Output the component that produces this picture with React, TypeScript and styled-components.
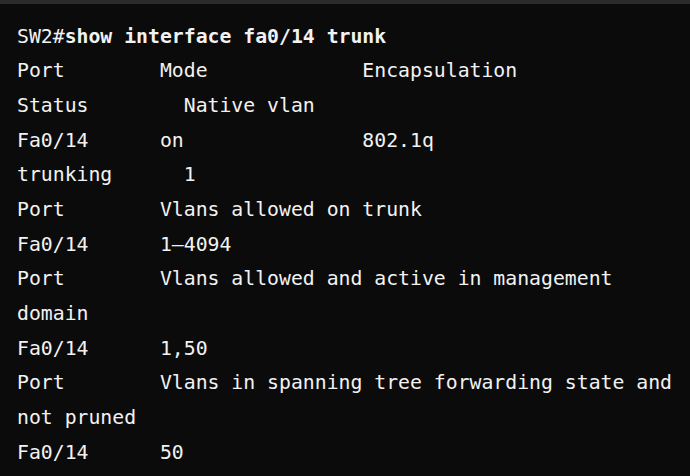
import React from "react";
import styled, { createGlobalStyle } from "styled-components";

const Global = createGlobalStyle`
  html, body {
    margin: 0;
    padding: 0;
    background: #0b0b0b;
  }
  #root {
    width: 690px;
    height: 476px;
  }
`;

const Frame = styled.div`
  width: 690px;
  height: 476px;
  background: #0b0b0b;
  display: flex;
  flex-direction: column;
  overflow: hidden;
  box-sizing: border-box;
`;

const TopEdge = styled.div`
  height: 4px;
  flex: none;
  background: #2b2b2b;
`;

const Terminal = styled.pre`
  margin: 0;
  padding: 15.6px 0 0 17px;
  font-family: "DejaVu Sans Mono", "Liberation Mono", monospace;
  font-size: 19.8px;
  line-height: 34.7px;
  color: #f2f2f2;
  display: flex;
  flex-direction: column;
`;

const Line = styled.div`
  white-space: pre;
  height: 34.7px;
`;

const Cmd = styled.span`
  font-weight: bold;
`;

const lines: string[] = [
  "Port        Mode             Encapsulation",
  "Status        Native vlan",
  "Fa0/14      on               802.1q",
  "trunking      1",
  "Port        Vlans allowed on trunk",
  "Fa0/14      1\u20134094",
  "Port        Vlans allowed and active in management",
  "domain",
  "Fa0/14      1,50",
  "Port        Vlans in spanning tree forwarding state and",
  "not pruned",
  "Fa0/14      50",
];

export default function App() {
  return (
    <>
      <Global />
      <Frame>
        <TopEdge />
        <Terminal>
          <Line>
            SW2#<Cmd>show interface fa0/14 trunk</Cmd>
          </Line>
          {lines.map((l, i) => (
            <Line key={i}>{l}</Line>
          ))}
        </Terminal>
      </Frame>
    </>
  );
}
